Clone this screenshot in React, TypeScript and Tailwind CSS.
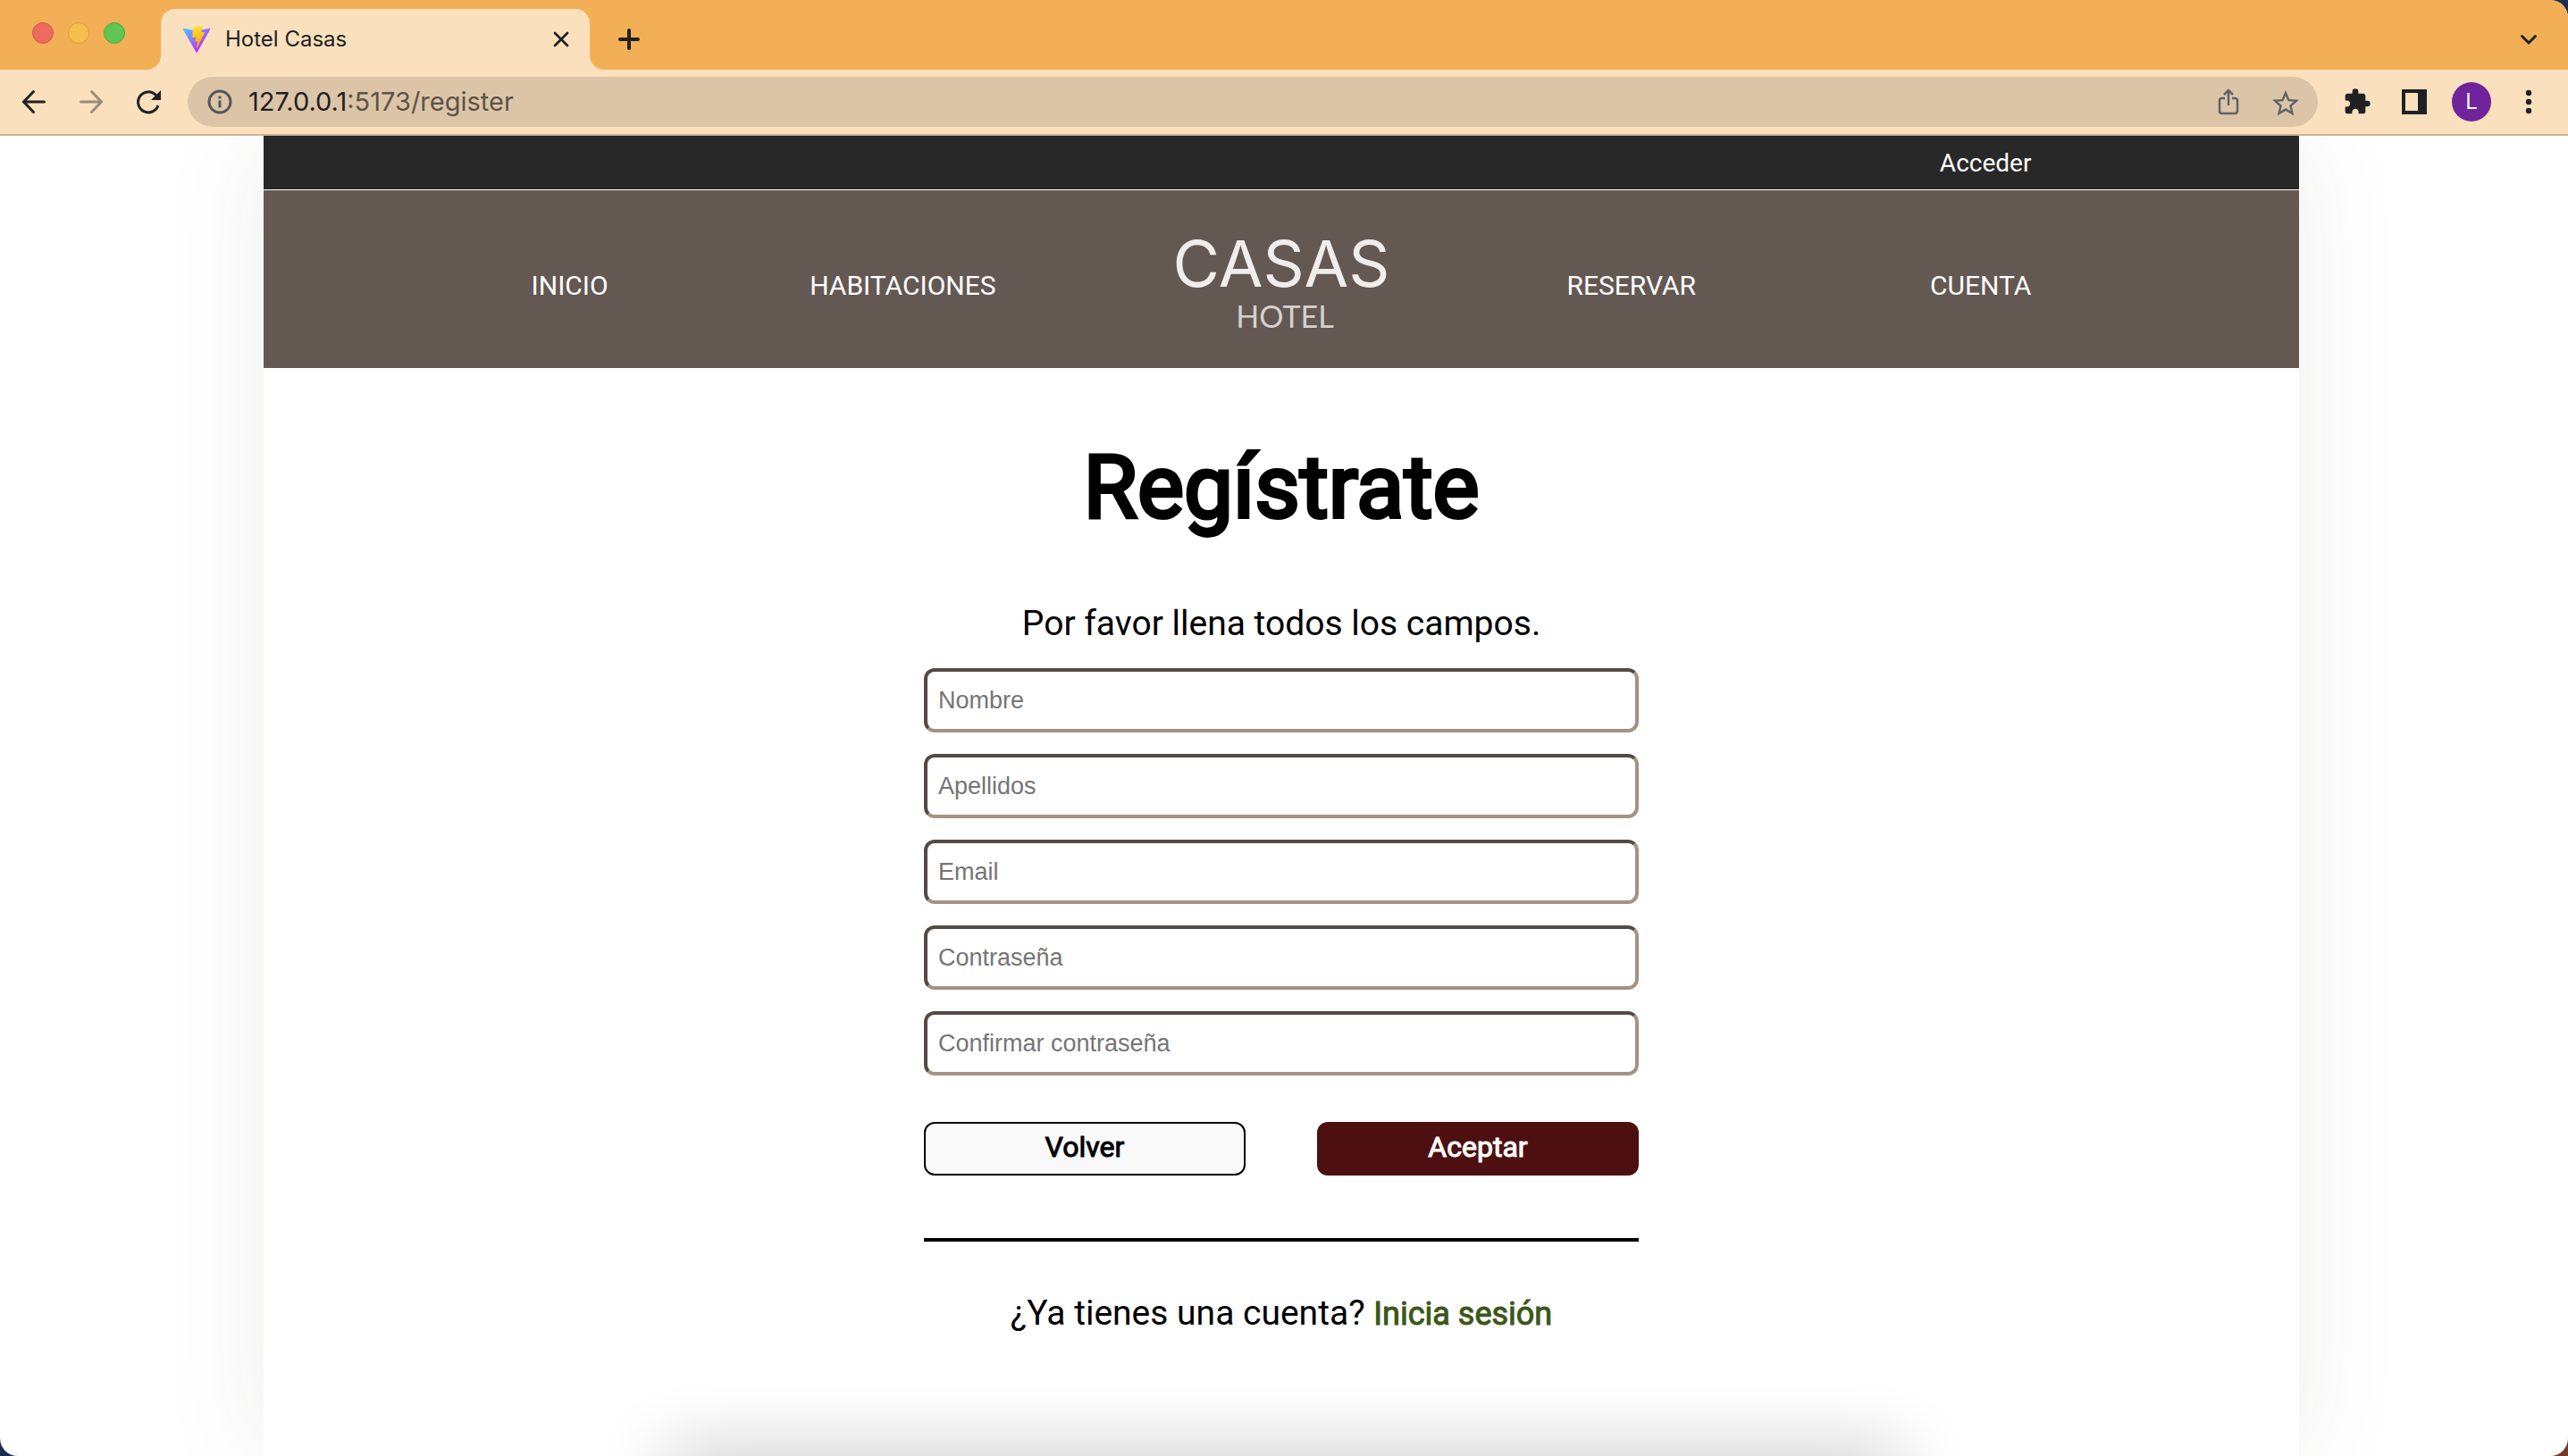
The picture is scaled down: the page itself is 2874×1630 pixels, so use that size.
import type { ReactNode } from 'react';
import { MdExtension, MdStarOutline } from 'react-icons/md';

function WindowBar() {
  return (
    <div className="relative flex h-[78px] shrink-0 items-stretch bg-[#f3af56]">
      <div className="flex w-[180px] items-start gap-4 pt-[25px] pl-9">
        <button aria-label="Cerrar ventana" className="size-6 rounded-full border border-[#d5544a] bg-[#ee6a5f]" />
        <button aria-label="Minimizar" className="size-6 rounded-full border border-[#d9a03a] bg-[#f5bf4f]" />
        <button aria-label="Maximizar" className="size-6 rounded-full border border-[#4ea73d] bg-[#61c554]" />
      </div>
      <div className="relative mt-2.5 flex w-[480px] items-center rounded-t-2xl bg-[#fae0bd] pr-5 pl-6">
        <svg className="absolute bottom-0 -left-4 size-4" viewBox="0 0 16 16" aria-hidden="true">
          <path d="M16 0v16H0A16 16 0 0 0 16 0z" fill="#fae0bd" />
        </svg>
        <svg className="absolute -right-4 bottom-0 size-4" viewBox="0 0 16 16" aria-hidden="true">
          <path d="M0 0v16h16A16 16 0 0 1 0 0z" fill="#fae0bd" />
        </svg>
        <svg className="size-8" viewBox="0 0 410 404" aria-hidden="true">
          <defs>
            <linearGradient id="va" x1="6" y1="33" x2="235" y2="344" gradientUnits="userSpaceOnUse">
              <stop stopColor="#41D1FF" />
              <stop offset="1" stopColor="#BD34FE" />
            </linearGradient>
            <linearGradient id="vb" x1="194.6" y1="8.8" x2="236" y2="293" gradientUnits="userSpaceOnUse">
              <stop stopColor="#FFEA83" />
              <stop offset=".083" stopColor="#FFDD35" />
              <stop offset="1" stopColor="#FFA800" />
            </linearGradient>
          </defs>
          <path d="M399.641 59.525 215.643 388.545c-3.8 6.793-13.56 6.833-17.415.073L10.582 59.556C6.38 52.19 12.68 43.267 21.028 44.759l184.195 32.923a10 10 0 0 0 3.553-.006l180.343-32.87c8.32-1.517 14.649 7.338 10.522 14.719z" fill="url(#va)" />
          <path d="M292.965 1.5744L156.801 28.2552C154.563 28.6937 152.906 30.5903 152.771 32.8664L144.395 174.33C144.198 177.662 147.258 180.248 150.51 179.498L188.42 170.749C191.967 169.931 195.172 173.055 194.443 176.622L183.18 231.775C182.422 235.487 185.907 238.661 189.532 237.56L212.947 230.446C216.577 229.344 220.065 232.527 219.297 236.242L201.398 322.875C200.278 328.294 207.486 331.249 210.492 326.603L212.5 323.5L323.454 102.072C325.312 98.3645 322.108 94.137 318.036 94.9228L279.014 102.454C275.347 103.161 272.227 99.746 273.262 96.1583L298.731 7.86689C299.767 4.27314 296.636 0.855181 292.965 1.5744Z" fill="url(#vb)" />
        </svg>
        <span className="ml-4 flex-1 text-[24px] text-[#202124]">Hotel Casas</span>
        <button aria-label="Cerrar pestaña" className="grid size-6 place-items-center">
          <svg className="size-6" viewBox="0 0 24 24" fill="none" stroke="#202124" strokeWidth="2.8" strokeLinecap="round">
            <path d="M5 5l14 14M19 5l-14 14" />
          </svg>
        </button>
      </div>
      <button aria-label="Nueva pestaña" className="mt-8 ml-8 size-6">
        <svg className="size-6" viewBox="0 0 24 24" fill="none" stroke="#202124" strokeWidth="4" strokeLinecap="round">
          <path d="M12 2v20M2 12h20" />
        </svg>
      </button>
      <button aria-label="Buscar pestañas" className="mt-8 mr-8 ml-auto size-6">
        <svg className="size-6" viewBox="0 0 24 24" fill="none" stroke="#202124" strokeWidth="3" strokeLinecap="round">
          <path d="M4.500 8.500l7.500 7.500 7.500-7.500" />
        </svg>
      </button>
    </div>
  );
}

function ToolButton({ label, children }: { label: string; children: ReactNode }) {
  return (
    <button aria-label={label} className="grid size-8 shrink-0 place-items-center">
      {children}
    </button>
  );
}

function Toolbar() {
  return (
    <div className="flex h-[74px] shrink-0 items-center border-b-2 border-[#c9b391] bg-[#fae0bd] pr-7 pl-[22px]">
      <div className="flex w-[188px] gap-8">
        <ToolButton label="Atrás">
          <svg className="size-8" viewBox="0 0 32 32" fill="none" stroke="#202124" strokeWidth="3" strokeLinecap="round">
            <path d="M27.500 16H5M15.500 4.500L4.500 16l11 11.500" />
          </svg>
        </ToolButton>
        <ToolButton label="Adelante">
          <svg className="size-8" viewBox="0 0 32 32" fill="none" stroke="#9a8b77" strokeWidth="3" strokeLinecap="round">
            <path d="M4.500 16H27M16.500 4.500l11 11.500-11 11.500" />
          </svg>
        </ToolButton>
        <ToolButton label="Recargar">
          <svg className="size-8" viewBox="0 0 32 32" fill="none" stroke="#202124" strokeWidth="3">
            <path d="M27 20A11.500 11.500 0 1 1 24 8l3 3" />
            <path d="M30 3v11H19z" fill="#202124" stroke="none" />
          </svg>
        </ToolButton>
      </div>
      <div className="flex h-14 flex-1 items-center rounded-full bg-[#dcc5a6] px-[22px]">
        <svg className="size-7" viewBox="0 0 28 28" fill="none" stroke="#55575b" strokeWidth="3" aria-hidden="true">
          <circle cx="14" cy="14" r="12" />
          <path d="M14 12.500v8M14 7.500v3" />
        </svg>
        <span className="ml-[18px] flex-1 text-[29px] text-[#202124]">
          127.0.0.1<span className="text-[#5c5349]">:5173/register</span>
        </span>
        <ToolButton label="Compartir">
          <svg className="size-8" viewBox="0 0 32 32" fill="none" stroke="#5f6368" strokeWidth="2.500">
            <path d="M12 12H8.500A2.500 2.500 0 0 0 6 14.500v12A2.500 2.500 0 0 0 8.500 29h15a2.500 2.500 0 0 0 2.500-2.500v-12a2.500 2.500 0 0 0-2.500-2.500H20M16 20V3.500M11 8l5-5 5 5" />
          </svg>
        </ToolButton>
        <div className="ml-[30px] flex">
          <ToolButton label="Añadir a marcadores">
            <MdStarOutline className="size-9 text-[#5f6368]" />
          </ToolButton>
        </div>
      </div>
      <div className="ml-7 flex items-center gap-8">
        <ToolButton label="Extensiones">
          <MdExtension className="size-8 text-[#202124]" />
        </ToolButton>
        <ToolButton label="Panel lateral">
          <svg className="size-7" viewBox="0 0 28 28" aria-hidden="true">
            <path d="M0 0h28v28H0zM4 4v20h14V4z" fill="#202124" fillRule="evenodd" />
          </svg>
        </ToolButton>
        <button aria-label="Perfil" className="-mx-1.5 size-11 rounded-full bg-[#6f249b] text-[24px] text-white">
          L
        </button>
        <ToolButton label="Menú">
          <svg className="size-8" viewBox="0 0 32 32" fill="#202124">
            <circle cx="16" cy="6" r="3.200" />
            <circle cx="16" cy="16" r="3.200" />
            <circle cx="16" cy="26" r="3.200" />
          </svg>
        </ToolButton>
      </div>
    </div>
  );
}

function Logo() {
  return (
    <a href="#" aria-label="Casas Hotel" className="block">
      <svg className="h-[104px] w-[260px] overflow-visible" viewBox="0 0 260 104" textAnchor="middle">
        <text x="130" y="53" fill="#efeeed" fontFamily="Inter, sans-serif" fontSize="72">CASAS</text>
        <text x="134" y="99" fill="#d5d1cf" fontFamily="Lato, sans-serif" fontSize="34">HOTEL</text>
      </svg>
    </a>
  );
}

const fields = [
  { id: 'nombre', label: 'Nombre', type: 'text' },
  { id: 'apellidos', label: 'Apellidos', type: 'text' },
  { id: 'email', label: 'Email', type: 'email' },
  { id: 'contrasena', label: 'Contraseña', type: 'password' },
  { id: 'confirmar', label: 'Confirmar contraseña', type: 'password' },
];

export default function App() {
  return (
    <div className="min-h-screen bg-[linear-gradient(to_top_left,#7a3a22,#1c2f4f_10%)]">
      <div className="relative flex min-h-screen flex-col overflow-hidden rounded-r-[20px] rounded-bl-[20px] bg-white font-['Inter',sans-serif]">
        <WindowBar />
        <Toolbar />
        <div className="flex flex-1 flex-col overflow-hidden font-['Roboto',sans-serif]">
          <div className="mr-1.5 flex flex-1 flex-col px-[10.250%]">
            <div className="flex flex-1 flex-col bg-white shadow-[0_0_110px_rgba(100,88,82,0.100)]">
              <div className="flex h-[60px] items-center justify-end bg-[#282828] px-[300px] pt-0.5">
                <a href="#" className="text-[28px] text-white">Acceder</a>
              </div>
              <nav className="mt-px flex h-[199px] items-center justify-between bg-[#645852] px-[300px] pt-3.5 text-[30px] text-white">
                <div className="flex w-[520px] justify-between">
                  <a href="#">INICIO</a>
                  <a href="#">HABITACIONES</a>
                </div>
                <Logo />
                <div className="flex w-[520px] justify-between">
                  <a href="#">RESERVAR</a>
                  <a href="#">CUENTA</a>
                </div>
              </nav>
              <main className="mx-auto w-[800px] text-center text-black">
                <h1 className="mt-[72px] text-[98px] leading-[124px] font-normal [-webkit-text-stroke:4px_#000]">Regístrate</h1>
                <p className="mt-16 text-[39px] leading-[52px]">Por favor llena todos los campos.</p>
                <form className="mt-6" onSubmit={(e) => e.preventDefault()}>
                  <div className="flex flex-col gap-6">
                    {fields.map((f) => (
                      <input
                        key={f.id}
                        id={f.id}
                        type={f.type}
                        aria-label={f.label}
                        placeholder={f.label}
                        className="h-[72px] w-full rounded-xl border-4 border-t-[#534a43] border-r-[#a39383] border-b-[#a39383] border-l-[#534a43] px-3 font-['Liberation_Sans',sans-serif] text-[27px] placeholder:text-[#757575]"
                      />
                    ))}
                  </div>
                  <div className="mt-[52px] grid grid-cols-2 gap-20 text-[32px]">
                    <button type="button" className="h-[60px] rounded-xl border-2 border-black bg-[#f9f9f9] pb-1 [-webkit-text-stroke:1px_#000]">
                      Volver
                    </button>
                    <button type="submit" className="h-[60px] rounded-xl bg-[#4e0f11] pb-1 text-white [-webkit-text-stroke:1px_#fff]">
                      Aceptar
                    </button>
                  </div>
                </form>
                <hr className="mt-[70px] border-t-4 border-black" />
                <p className="mt-[54px] text-[39px] leading-[52px]">
                  ¿Ya tienes una cuenta?{' '}
                  <a href="#" className="text-[36px] text-[#3b5718] [-webkit-text-stroke:1px_#3b5718]">Inicia sesión</a>
                </p>
              </main>
            </div>
          </div>
        </div>
        <div className="absolute -bottom-10 left-[26%] h-10 w-[48%] shadow-[0_0_80px_rgba(0,0,0,0.300)]" />
      </div>
    </div>
  );
}
